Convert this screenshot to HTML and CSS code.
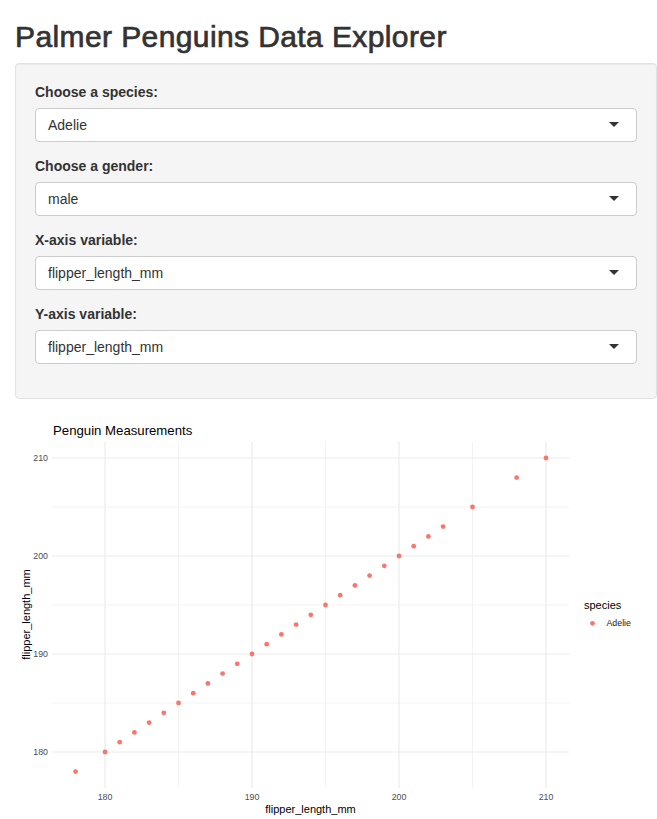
FILE: index.html
```html
<!DOCTYPE html>
<html lang="en">
<head>
<meta charset="utf-8">
<title>Palmer Penguins Data Explorer</title>
<link rel="stylesheet" href="styles.css">
</head>
<body>
<div class="container">
  <h2 class="title">Palmer Penguins Data Explorer</h2>
  <div class="well">
    <div class="form-group">
      <label class="control-label">Choose a species:</label>
      <div class="select"><span class="value">Adelie</span><span class="arrow"></span></div>
    </div>
    <div class="form-group">
      <label class="control-label">Choose a gender:</label>
      <div class="select"><span class="value">male</span><span class="arrow"></span></div>
    </div>
    <div class="form-group">
      <label class="control-label">X-axis variable:</label>
      <div class="select"><span class="value">flipper_length_mm</span><span class="arrow"></span></div>
    </div>
    <div class="form-group">
      <label class="control-label">Y-axis variable:</label>
      <div class="select"><span class="value">flipper_length_mm</span><span class="arrow"></span></div>
    </div>
  </div>
  <div class="plot">
    <svg class="plot-svg" width="642" height="401" viewBox="15 418 642 401" xmlns="http://www.w3.org/2000/svg">
      <rect x="15" y="418" width="642" height="401" fill="#ffffff"/>
      <g class="grid-minor" stroke="#f3f3f3" stroke-width="1">
        <line x1="52" y1="506" x2="569" y2="506"/>
        <line x1="52" y1="604" x2="569" y2="604"/>
        <line x1="52" y1="702" x2="569" y2="702"/>
        <line x1="178.5" y1="441" x2="178.5" y2="787"/>
        <line x1="325.5" y1="441" x2="325.5" y2="787"/>
        <line x1="472.5" y1="441" x2="472.5" y2="787"/>
      </g>
      <g class="grid-major" stroke="#ebebeb" stroke-width="1.2">
        <line x1="52" y1="457" x2="569" y2="457"/>
        <line x1="52" y1="555" x2="569" y2="555"/>
        <line x1="52" y1="653" x2="569" y2="653"/>
        <line x1="52" y1="751" x2="569" y2="751"/>
        <line x1="105" y1="441" x2="105" y2="787"/>
        <line x1="252" y1="441" x2="252" y2="787"/>
        <line x1="399" y1="441" x2="399" y2="787"/>
        <line x1="546" y1="441" x2="546" y2="787"/>
      </g>
      <g class="tick" font-family="Liberation Sans, Arial, sans-serif" font-size="8.8" fill="#4d4d4d">
        <text x="48" y="460" text-anchor="end">210</text>
        <text x="48" y="558" text-anchor="end">200</text>
        <text x="48" y="656" text-anchor="end">190</text>
        <text x="48" y="754" text-anchor="end">180</text>
        <text x="105" y="799" text-anchor="middle">180</text>
        <text x="252" y="799" text-anchor="middle">190</text>
        <text x="399" y="799" text-anchor="middle">200</text>
        <text x="546" y="799" text-anchor="middle">210</text>
      </g>
      <g font-family="Liberation Sans, Arial, sans-serif" fill="#000000">
        <text x="53" y="434" font-size="13.2">Penguin Measurements</text>
        <text x="310.5" y="812" font-size="11" text-anchor="middle">flipper_length_mm</text>
        <text x="30" y="613.5" font-size="11" text-anchor="middle" transform="rotate(-90 30 613.5)">flipper_length_mm</text>
        <text x="584" y="607.5" font-size="11">species</text>
        <text x="606.5" y="625.3" font-size="8.8" fill="#1a1a1a">Adelie</text>
      </g>
      <circle cx="592.5" cy="622.3" r="2.4" fill="#F8766D"/>
      <g fill="#F8766D">
        <circle cx="75.6" cy="770.6" r="2.4"/>
        <circle cx="105" cy="751" r="2.4"/>
        <circle cx="119.7" cy="741.2" r="2.4"/>
        <circle cx="134.4" cy="731.4" r="2.4"/>
        <circle cx="149.1" cy="721.6" r="2.4"/>
        <circle cx="163.8" cy="711.8" r="2.4"/>
        <circle cx="178.5" cy="702" r="2.4"/>
        <circle cx="193.2" cy="692.2" r="2.4"/>
        <circle cx="207.9" cy="682.4" r="2.4"/>
        <circle cx="222.6" cy="672.6" r="2.4"/>
        <circle cx="237.3" cy="662.8" r="2.4"/>
        <circle cx="252" cy="653" r="2.4"/>
        <circle cx="266.7" cy="643.2" r="2.4"/>
        <circle cx="281.4" cy="633.4" r="2.4"/>
        <circle cx="296.1" cy="623.6" r="2.4"/>
        <circle cx="310.8" cy="613.8" r="2.4"/>
        <circle cx="325.5" cy="604" r="2.4"/>
        <circle cx="340.2" cy="594.2" r="2.4"/>
        <circle cx="354.9" cy="584.4" r="2.4"/>
        <circle cx="369.6" cy="574.6" r="2.4"/>
        <circle cx="384.3" cy="564.8" r="2.4"/>
        <circle cx="399" cy="555" r="2.4"/>
        <circle cx="413.7" cy="545.2" r="2.4"/>
        <circle cx="428.4" cy="535.4" r="2.4"/>
        <circle cx="443.1" cy="525.6" r="2.4"/>
        <circle cx="472.5" cy="506" r="2.4"/>
        <circle cx="516.6" cy="476.6" r="2.4"/>
        <circle cx="546" cy="457" r="2.4"/>
      </g>
    </svg>
  </div>
</div>
</body>
</html>
```
FILE: styles.css
```css
html, body {
  margin: 0;
  padding: 0;
  background: #ffffff;
}
body {
  font-family: "Liberation Sans", Arial, Helvetica, sans-serif;
  font-size: 14px;
  line-height: 1.42857;
  color: #333333;
}
.container {
  padding: 0 0 0 15px;
}
.title {
  font-size: 30px;
  font-weight: 400;
  line-height: 1.1;
  letter-spacing: 0.4px;
  -webkit-text-stroke: 0.7px #333333;
  margin: 20px 0 10px 0;
  color: #333333;
}
.well {
  background: #f5f5f5;
  border: 1px solid #e3e3e3;
  border-radius: 4px;
  padding: 19px;
  margin-bottom: 20px;
  box-shadow: inset 0 1px 1px rgba(0,0,0,0.05);
}
.form-group {
  margin-bottom: 15px;
}
.control-label {
  display: inline-block;
  font-weight: 700;
  margin-bottom: 5px;
}
.select {
  display: flex;
  align-items: center;
  justify-content: space-between;
  height: 34px;
  box-sizing: border-box;
  padding: 6px 17px 6px 12px;
  background: #ffffff;
  border: 1px solid #cccccc;
  border-radius: 4px;
  line-height: 20px;
  color: #333333;
}
.arrow {
  width: 0;
  height: 0;
  border-style: solid;
  border-width: 5px 5px 0 5px;
  border-color: #333333 transparent transparent transparent;
}
.plot {
  height: 401px;
}
.plot-svg {
  display: block;
}
```
